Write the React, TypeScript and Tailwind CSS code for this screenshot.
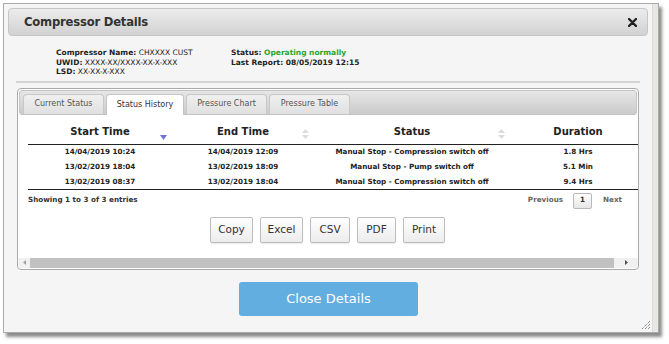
import React from "react";

const rows = [
  ["14/04/2019 10:24", "14/04/2019 12:09", "Manual Stop - Compression switch off", "1.8 Hrs"],
  ["13/02/2019 18:04", "13/02/2019 18:09", "Manual Stop - Pump switch off", "5.1 Min"],
  ["13/02/2019 08:37", "13/02/2019 18:04", "Manual Stop - Compression switch off", "9.4 Hrs"],
];

const tabs = ["Current Status", "Status History", "Pressure Chart", "Pressure Table"];
const tabWidths = ["w-[81px]", "w-[78px]", "w-[81px]", "w-[81px]"];

function SortBoth() {
  return (
    <svg width="7" height="10" viewBox="0 0 7 10" className="absolute right-[5px] top-[8px]">
      <path d="M3.5 0 L7 4 L0 4 Z" fill="#dcdcdc" />
      <path d="M3.5 10 L7 6 L0 6 Z" fill="#dcdcdc" />
    </svg>
  );
}

function SortDesc() {
  return (
    <svg width="7" height="6" viewBox="0 0 7 6" className="absolute right-[5px] top-[14px]">
      <path d="M0 0 L7 0 L3.5 5 Z" fill="#6f75d8" />
    </svg>
  );
}

function ExportButton({ label, width }: { label: string; width: string }) {
  return (
    <button
      className={`${width} h-[26px] rounded-[2px] border border-[#bdbdbd] bg-gradient-to-b from-white to-[#ececec] text-[10.5px] text-[#333] shadow-[0_1px_1px_rgba(0,0,0,0.08)]`}
    >
      {label}
    </button>
  );
}

export default function App() {
  return (
    <div className="relative h-[344px] w-[669px] bg-white font-['DejaVu_Sans',sans-serif] text-[#222]">
      <div className="absolute left-[3px] top-[3px] flex h-[330px] w-[656px] border border-[#a9a9a9] bg-[#f5f5f5] shadow-[3px_4px_3px_rgba(0,0,0,0.45)]">
        <div className="flex w-[648px] flex-col pl-[4px] pt-[4px]">
          {/* header */}
          <div className="flex h-[28px] w-[640px] items-center justify-between rounded-[4px] border border-[#c6c6c6] bg-gradient-to-b from-[#ececec] to-[#d2d2d2] pl-[15px] pr-[10px] pt-[1px]">
            <span className="text-[11.6px] font-bold tracking-[-0.2px] text-[#333]">Compressor Details</span>
            <svg width="9" height="9" viewBox="0 0 9 9">
              <path d="M1 1 L8 8 M8 1 L1 8" stroke="#222" strokeWidth="2.4" strokeLinecap="round" />
            </svg>
          </div>

          {/* info */}
          <div className="flex pl-[48px] pt-[12px] text-[7.5px] leading-[9.5px]">
            <div className="w-[175px]">
              <p>
                <span className="font-bold">Compressor Name:</span> CHXXXX CUST
              </p>
              <p>
                <span className="font-bold">UWID:</span> XXXX-XX/XXXX-XX-X-XXX
              </p>
              <p>
                <span className="font-bold">LSD:</span> XX-XX-X-XXX
              </p>
            </div>
            <div className="font-bold">
              <p>
                Status: <span className="text-[#2aa52a]">Operating normally</span>
              </p>
              <p>Last Report: 08/05/2019 12:15</p>
            </div>
          </div>

          <div className="ml-[8px] mt-[4px] h-[2px] w-[624px] bg-[#d4d4d4]" />

          {/* tabs panel */}
          <div className="ml-[9px] mt-[5px] flex h-[182px] w-[622px] flex-col overflow-hidden rounded-[4px] border border-[#aaaaaa] bg-white">
            <div className="mx-[1px] mt-[1px] flex h-[25px] items-end gap-[2px] rounded-[3px] border border-[#c4c4c4] bg-gradient-to-b from-[#e6e6e6] to-[#cbcbcb] pl-[3px]">
              {tabs.map((t, i) => (
                <div
                  key={t}
                  className={`${tabWidths[i]} flex h-[20px] items-center justify-center rounded-t-[4px] border border-b-0 text-[8px] ${
                    i === 1
                      ? "mb-[-1px] h-[21px] border-[#c4c4c4] bg-white text-[#333]"
                      : "border-[#c8c8c8] bg-gradient-to-b from-[#f0f0f0] to-[#e0e0e0] text-[#555]"
                  }`}
                >
                  {t}
                </div>
              ))}
            </div>

            <div className="relative flex flex-1 flex-col overflow-hidden">
              <div className="w-[640px] pl-[10px] pt-[6px]">
                <table className="w-[618px] table-fixed border-collapse">
                  <colgroup>
                    <col className="w-[144px]" />
                    <col className="w-[142px]" />
                    <col className="w-[196px]" />
                    <col className="w-[136px]" />
                  </colgroup>
                  <thead>
                    <tr className="h-[24px] border-b border-[#222] text-[10px] font-bold text-[#222]">
                      <th className="relative pb-[1px]">
                        Start Time
                        <SortDesc />
                      </th>
                      <th className="relative pb-[1px]">
                        End Time
                        <SortBoth />
                      </th>
                      <th className="relative pb-[1px]">
                        Status
                        <SortBoth />
                      </th>
                      <th className="relative pb-[1px]">Duration</th>
                    </tr>
                  </thead>
                  <tbody className="border-b border-[#222] text-[7.2px] font-bold">
                    {rows.map((r) => (
                      <tr key={r[0]} className="h-[15px]">
                        {r.map((c, j) => (
                          <td key={j} className="text-center leading-[14px]">
                            {c}
                          </td>
                        ))}
                      </tr>
                    ))}
                  </tbody>
                </table>
              </div>

              <div className="flex h-[21px] w-[604px] items-center justify-between pl-[10px] text-[7.2px] font-bold">
                <span className="text-[#333]">Showing 1 to 3 of 3 entries</span>
                <div className="flex items-center text-[#666]">
                  <span>Previous</span>
                  <span className="ml-[10px] flex h-[16px] w-[19px] items-center justify-center rounded-[2px] border border-[#b8b8b8] bg-gradient-to-b from-white to-[#e6e6e6] text-[#333]">
                    1
                  </span>
                  <span className="ml-[11px]">Next</span>
                </div>
              </div>

              <div className="mt-[6px] flex gap-[7px] pl-[192px]">
                <ExportButton label="Copy" width="w-[43px]" />
                <ExportButton label="Excel" width="w-[43px]" />
                <ExportButton label="CSV" width="w-[40px]" />
                <ExportButton label="PDF" width="w-[39px]" />
                <ExportButton label="Print" width="w-[42px]" />
              </div>

              <div className="mt-auto mb-[1px] flex h-[10px] items-center bg-[#f1f1f1]">
                <span className="flex w-[12px] justify-center">
                  <svg width="3" height="5" viewBox="0 0 3 5">
                    <path d="M3 0 L0 2.5 L3 5 Z" fill="#a3a3a3" />
                  </svg>
                </span>
                <div className="h-[10px] w-[584px] bg-[#c1c1c1]" />
                <span className="flex flex-1 justify-center">
                  <svg width="3" height="5" viewBox="0 0 3 5">
                    <path d="M0 0 L3 2.5 L0 5 Z" fill="#505050" />
                  </svg>
                </span>
              </div>
            </div>
          </div>

          {/* footer */}
          <div className="flex justify-center pr-[3px] pt-[12px]">
            <button className="flex h-[34px] w-[179px] items-center justify-center rounded-[3px] bg-[#62aee0] text-[13px] text-white">
              Close Details
            </button>
          </div>
        </div>

        <div className="relative flex-1 border-l border-[#dddbd7] bg-[#e9e7e3]">
          <svg width="10" height="9" viewBox="0 0 10 9" className="absolute bottom-[3px] left-[-12px]">
            <path d="M9 1 L1 9 M9 4 L4 9 M9 7 L7 9" stroke="#555" strokeWidth="1" strokeDasharray="1 1" />
          </svg>
        </div>
      </div>
    </div>
  );
}
